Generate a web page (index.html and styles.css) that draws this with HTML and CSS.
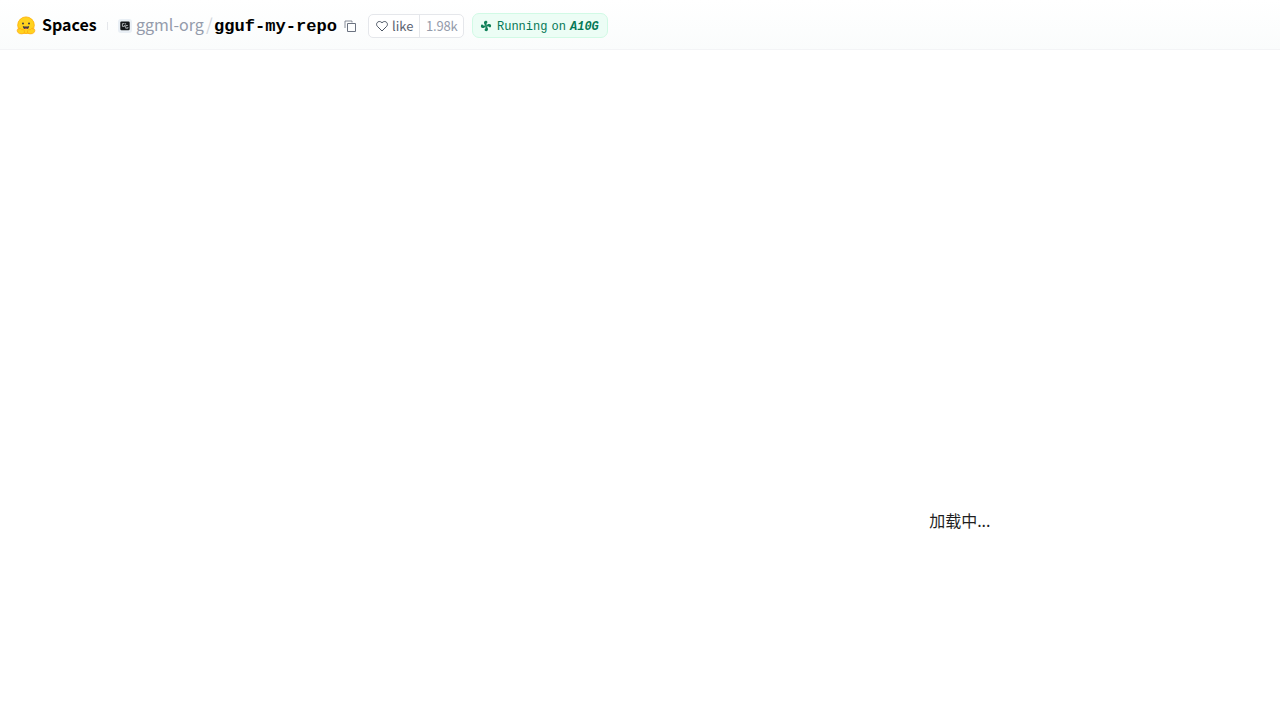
FILE: index.html
```
<!DOCTYPE html>
<html lang="zh-CN">

<head>
    <meta charset="utf-8">
    <meta name="viewport" content="width=device-width, initial-scale=1.0">
    <title>gguf-my-repo</title>
    <link rel="stylesheet" href="styles.css">
</head>

<body>
    <header>
        <a class="spaces">
            <svg class="logo" viewBox="0 0 20 20">
                <path d="M4 14h12v3.600H4z" fill="#ffc61a"/>
                <circle cx="10" cy="9.200" r="8.300" fill="#ffd21e" stroke="#ffad03" stroke-width=".8"/>
                <circle cx="7" cy="7.400" r="1" fill="#3a3b45"/>
                <circle cx="13" cy="7.400" r="1" fill="#3a3b45"/>
                <path d="M6.800 9.900q3.200 1.300 6.400 0q-.3 3.200-3.200 3.200t-3.200-3.200z" fill="#3a3b45"/>
                <path d="M8.500 12.200q1.500-1.100 3 0q-1.500 1.300-3 0z" fill="#ef4e4e"/>
                <path d="M1.500 13.200q.8-.6 1.500.3q-.2-1.900 1-1.400l1.700 1.700q2-.9 2.600.9q.9 3-2.600 3.200q-2.800.1-4-1.600q-1.100-1.700-.2-3.100z" fill="#ffd21e" stroke="#ff9d0b" stroke-width=".6"/>
                <path d="M18.500 13.200q-.8-.6-1.500.3q.2-1.900-1-1.400l-1.700 1.700q-2-.9-2.600.9q-.9 3 2.600 3.200q2.800.1 4-1.600q1.100-1.700.2-3.100z" fill="#ffd21e" stroke="#ff9d0b" stroke-width=".6"/>
            </svg>
            <span class="spaces-name">Spaces</span>
        </a>
        <span class="divider"></span>
        <svg class="avatar" viewBox="0 0 14 14">
            <rect width="14" height="14" rx="3" fill="#e9eff5"/>
            <rect x="2.300" y="2.500" width="9.400" height="8.700" rx="1.200" fill="#15181b"/>
            <path d="M6.500 4.600H4.400v2.800h2.100V6.200M9.800 6.500H7.700v2.700h2.200V8M7.600 4.200v1.300" fill="none" stroke="#b9bdc1" stroke-width=".9"/>
        </svg>
        <a class="owner">ggml-org</a>
        <span class="slash">/</span>
        <a class="repo">gguf-my-repo</a>
        <svg class="copy" viewBox="0 0 12 12" fill="none" stroke="#6b7280">
            <path d="M3.500 3.500h8v8h-8z"/>
            <path d="M1 8V1h7v1.500" stroke-width=".8"/>
        </svg>
        <div class="like">
            <button class="like-button">
                <svg class="heart" viewBox="0 0 12 12" fill="none" stroke="#4b5563">
                    <path d="M6 11L1.300 6.300C-1 3.700 2.500-.6 6 2.700C9.500-.6 13 3.700 10.700 6.300z" stroke-linejoin="round"/>
                </svg>
                <span class="like-text">like</span>
            </button>
            <span class="count">1.98k</span>
        </div>
        <div class="status">
            <svg class="fan" viewBox="0 0 12 12" fill="#0f8058">
                <path id="blade" d="M5.300 5.900L4.100 3.600C3.500 1.200 5.500.3 7 1.200C7.900 2 7.200 3 6.600 3.400L6.600 5.500z"/>
                <use href="#blade" transform="rotate(90 6 6)"/>
                <use href="#blade" transform="rotate(180 6 6)"/>
                <use href="#blade" transform="rotate(270 6 6)"/>
            </svg>
            <span class="running">Running on</span>
            <span class="hardware">A10G</span>
        </div>
    </header>

    <main>
        <p class="loading">加载中...</p>
    </main>
</body>

</html>
```
FILE: styles.css
```
* {
    box-sizing: border-box;
}

body {
    margin: 0;
    height: 100vh;
    display: flex;
    flex-direction: column;
    background-color: #fff;
    font-family: "Noto Sans CJK SC", sans-serif;
}

header {
    display: flex;
    align-items: center;
    height: 50px;
    padding: 2px 16px 0;
    border-bottom: 1px solid #f3f4f6;
    background: linear-gradient(to top, #fafcfc, #fff);
    line-height: 24px;
    white-space: nowrap;
}

svg {
    display: block;
    flex: none;
}

.spaces {
    display: flex;
    align-items: center;
    width: 91px;
}

.logo {
    width: 20px;
    height: 20px;
    margin-right: 6px;
}

.spaces-name {
    padding-bottom: 4px;
    font-size: 16px;
    font-weight: 700;
    color: #000;
}

.divider {
    width: 1px;
    height: 8px;
    margin-right: 10px;
    background-color: #e5e7eb;
}

.avatar {
    width: 14px;
    height: 14px;
    margin-right: 4px;
}

.owner {
    width: 70px;
    padding-bottom: 4px;
    font-size: 16px;
    color: #949bab;
}

.slash {
    width: 8px;
    padding-bottom: 4px;
    font-size: 17px;
    color: #d1d5db;
}

.repo {
    width: 130px;
    padding-top: 2px;
    font-family: "Liberation Mono", monospace;
    font-size: 17.1px;
    font-weight: 700;
    color: #000;
}

.copy {
    width: 12px;
    height: 12px;
    margin-right: 12px;
}

.like {
    display: flex;
    width: 96px;
    height: 24px;
    margin-right: 8px;
    border: 1px solid #e5e7eb;
    border-radius: 5px;
    background-color: #fff;
    font-size: 13px;
    line-height: 22px;
}

.like-button {
    display: flex;
    align-items: center;
    width: 51px;
    padding: 0 0 0 7px;
    border: 0;
    border-right: 1px solid #e5e7eb;
    background: none;
    font: inherit;
    color: #5b6472;
}

.heart {
    width: 12px;
    height: 12px;
    margin-right: 4px;
}

.count {
    padding-left: 6px;
    letter-spacing: -0.2px;
    color: #949bab;
}

.status {
    display: flex;
    align-items: center;
    width: 136px;
    height: 25px;
    padding-left: 7px;
    border: 1px solid #d1fae5;
    border-radius: 7px;
    background-color: #ecfdf5;
    font-family: "Liberation Mono", monospace;
    font-size: 12px;
    color: #047857;
}

.fan {
    width: 12px;
    height: 12px;
    margin-right: 5px;
}

.running,
.hardware {
    padding-top: 2px;
}

.running {
    width: 73px;
    word-spacing: -3px;
}

.hardware {
    font-weight: 700;
    font-style: italic;
}

main {
    flex: 1;
    display: flex;
    align-items: center;
    justify-content: flex-end;
    padding: 270px 289.5px 0 0;
}

.loading {
    margin: 0;
    font-size: 16px;
    line-height: 24px;
    color: #1f1f1f;
}
```
